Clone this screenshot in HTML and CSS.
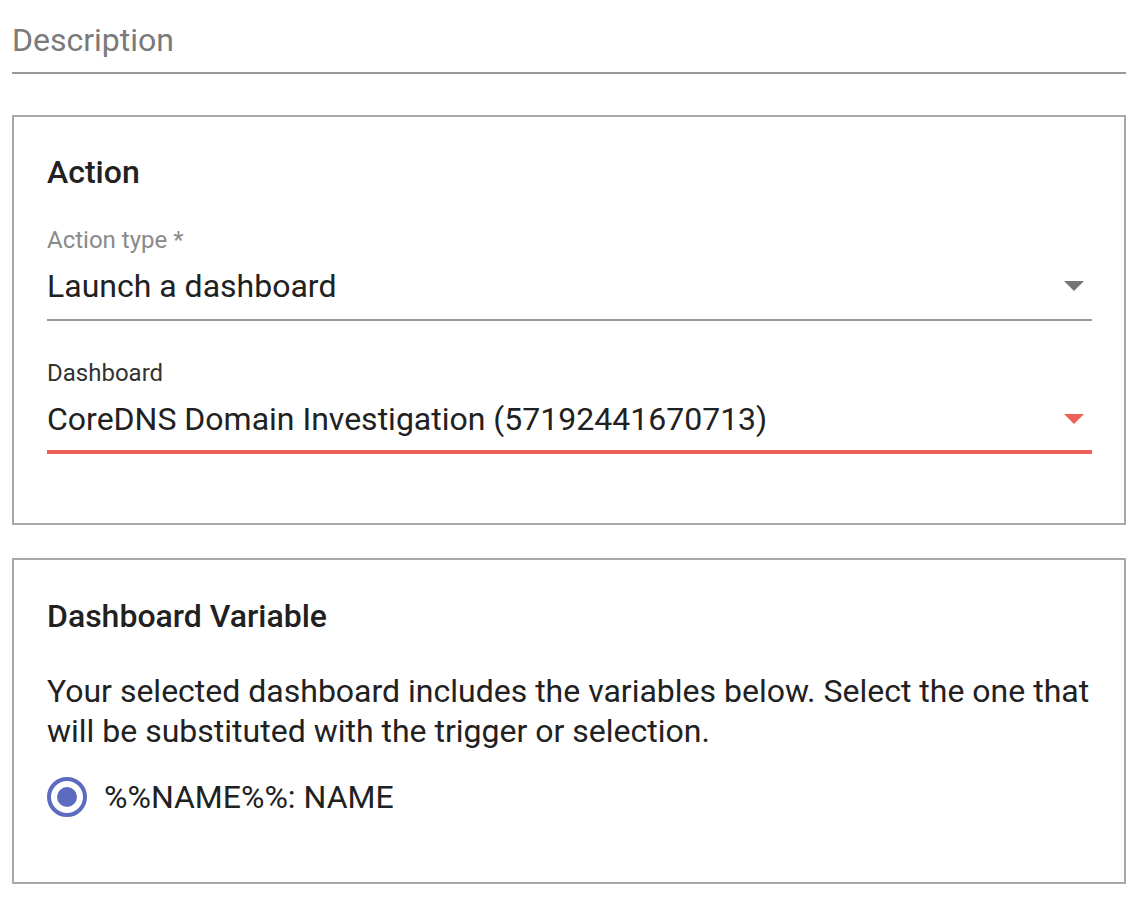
FILE: index.html
```html
<!DOCTYPE html>
<html lang="en">
<head>
<meta charset="utf-8">
<title>Action form</title>
<link rel="stylesheet" href="styles.css">
</head>
<body>
<div class="page">
  <div class="desc-field">Description</div>

  <section class="card card-action">
    <h2 class="card-title">Action</h2>

    <div class="field field-first">
      <label class="field-label">Action type *</label>
      <div class="field-input">
        <span class="field-value">Launch a dashboard</span>
        <svg class="caret" width="20" height="10" viewBox="0 0 20 10"><path d="M0 0 L10 10 L20 0 Z" fill="#757575"/></svg>
      </div>
    </div>

    <div class="field field-second">
      <label class="field-label label-dark">Dashboard</label>
      <div class="field-input field-error">
        <span class="field-value">CoreDNS Domain Investigation (57192441670713)</span>
        <svg class="caret" width="20" height="10" viewBox="0 0 20 10"><path d="M0 0 L10 10 L20 0 Z" fill="#ef5e57"/></svg>
      </div>
    </div>
  </section>

  <section class="card card-vars">
    <h2 class="card-title">Dashboard Variable</h2>
    <p class="card-text">Your selected dashboard includes the variables below. Select the one that will be substituted with the trigger or selection.</p>
    <div class="radio-row">
      <span class="radio"><span class="radio-dot"></span></span>
      <span class="radio-label">%%NAME%%: NAME</span>
    </div>
  </section>
</div>
</body>
</html>
```

FILE: styles.css
```css
* { box-sizing: border-box; }

html, body {
  margin: 0;
  padding: 0;
  background: #ffffff;
}

body {
  font-family: Roboto, "Liberation Sans", Arial, sans-serif;
  color: #212121;
}

.page {
  padding: 0 20px 0 12px;
}

.desc-field {
  font-size: 32px;
  line-height: 40px;
  color: #7a7a7a;
  padding-top: 20px;
  padding-bottom: 12px;
  border-bottom: 2px solid #9a9a9a;
}

.card {
  border: 2px solid #a8a8a8;
  padding: 35px 32px 0 33px;
}

.card-action {
  margin-top: 41px;
  padding-bottom: 69px;
}

.card-vars {
  margin-top: 33px;
  padding-top: 36px;
  padding-bottom: 65px;
}

.card-title {
  margin: 0;
  font-size: 32px;
  line-height: 40px;
  font-weight: 500;
  color: #212121;
}

.field-label {
  display: block;
  font-size: 24px;
  line-height: 30px;
  color: #8a8a8a;
}

.label-dark {
  color: #333333;
}

.field-first {
  margin-top: 33px;
}

.field-second {
  margin-top: 37px;
}

.field-input {
  display: flex;
  align-items: center;
  margin-top: 11px;
  padding-bottom: 13px;
  border-bottom: 2px solid #9a9a9a;
}

.field-error {
  padding-bottom: 11px;
  border-bottom: 4px solid #ef5e57;
}

.field-value {
  flex: 1;
  font-size: 32px;
  line-height: 40px;
  color: #212121;
}

.caret {
  display: block;
  margin-right: 8px;
  flex: none;
}

.card-text {
  margin: 35px 0 0;
  font-size: 32px;
  line-height: 40px;
  color: #212121;
}

.radio-row {
  display: flex;
  align-items: center;
  margin-top: 26px;
}

.radio {
  width: 40px;
  height: 40px;
  border: 4px solid #5c6bc0;
  border-radius: 50%;
  display: flex;
  align-items: center;
  justify-content: center;
  flex: none;
}

.radio-dot {
  width: 20px;
  height: 20px;
  border-radius: 50%;
  background: #5c6bc0;
}

.radio-label {
  margin-left: 17px;
  font-size: 32px;
  line-height: 40px;
  color: #212121;
}
```
